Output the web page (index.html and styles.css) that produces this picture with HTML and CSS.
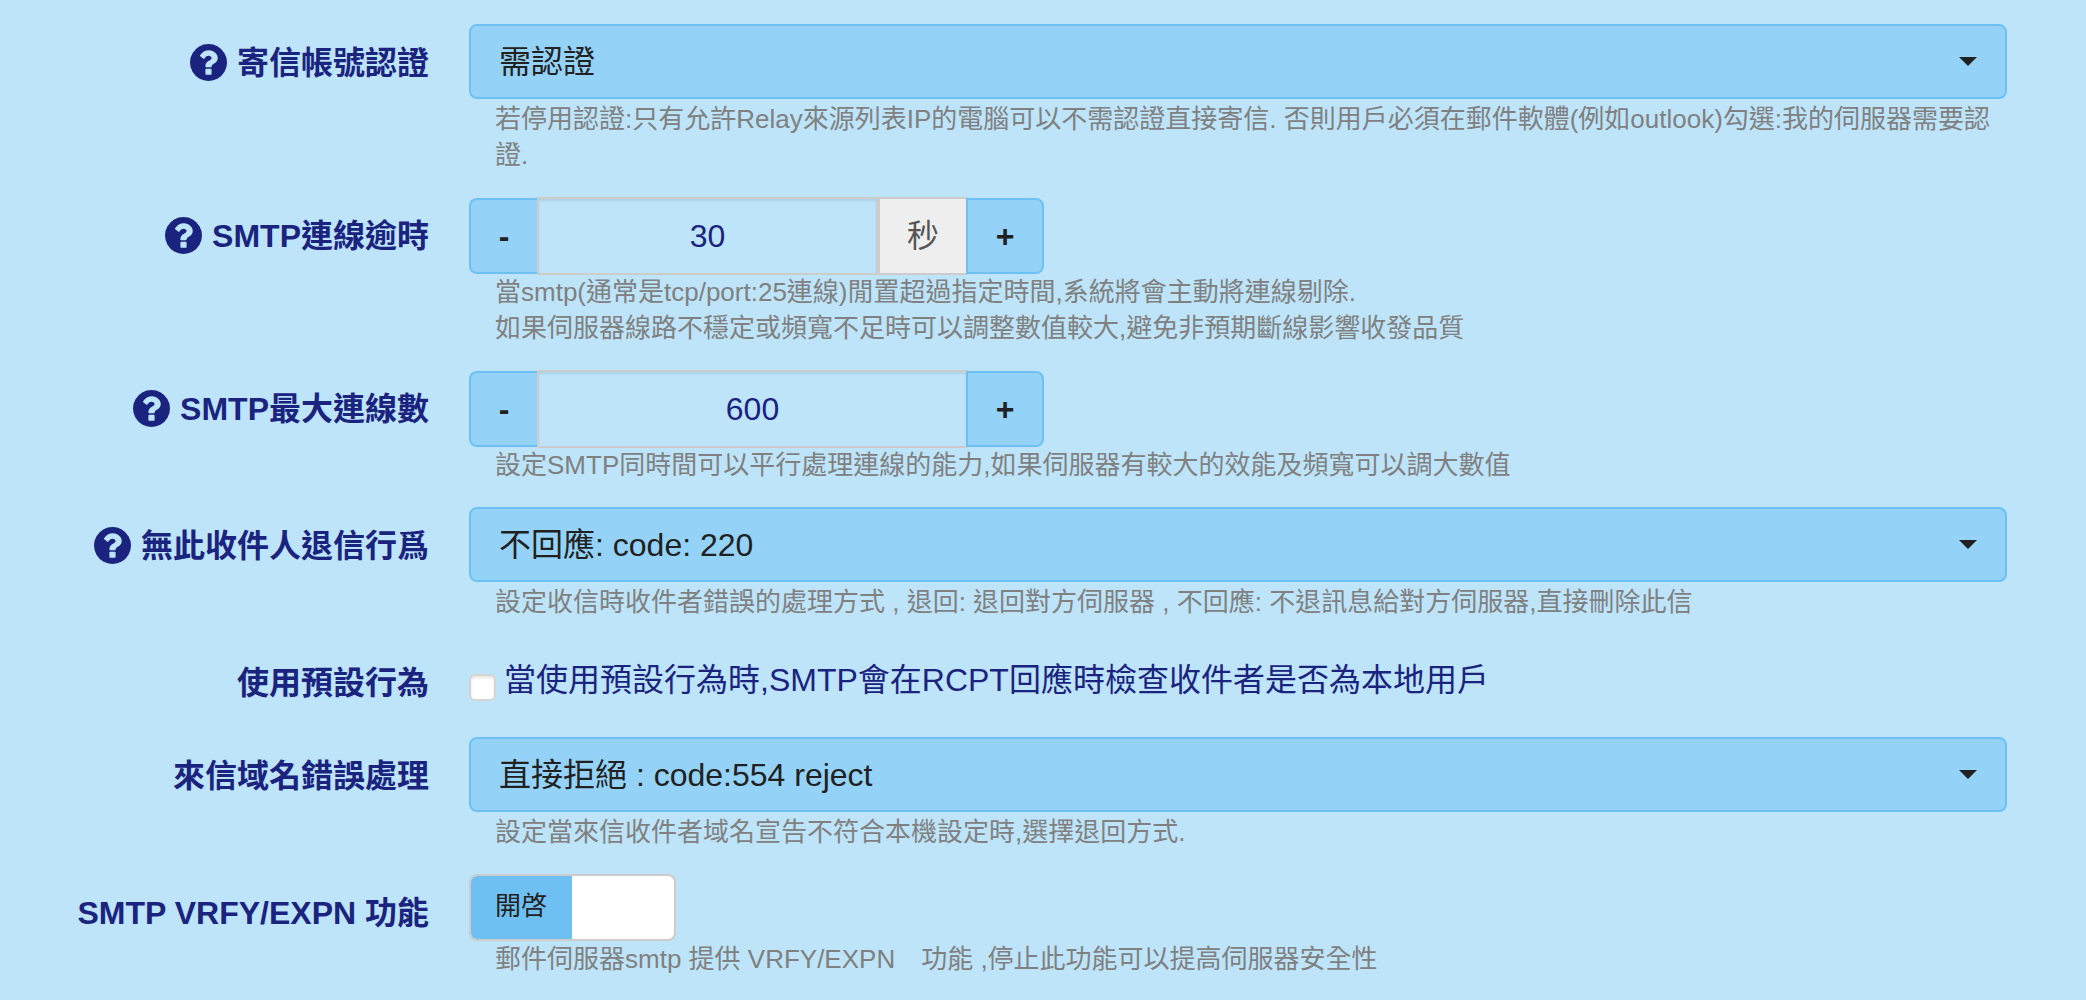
FILE: index.html
```html
<!DOCTYPE html>
<html lang="zh-Hant">
<head>
<meta charset="utf-8">
<meta name="viewport" content="width=device-width, initial-scale=1">
<title>SMTP 設定</title>
<link rel="stylesheet" href="styles.css">
</head>
<body>
<svg class="sprite" aria-hidden="true">
  <symbol id="help" viewBox="0 0 1536 1536">
    <path d="M896 1248v-192q0-14-9-23t-23-9H672q-14 0-23 9t-9 23v192q0 14 9 23t23 9h192q14 0 23-9t9-23zm256-672q0-88-55.500-163T958 297t-170-41q-243 0-371 213-15 24 8 42l132 100q7 6 19 6 16 0 25-12 53-68 86-92 34-24 86-24 48 0 85.500 26t37.500 59q0 38-20 61t-68 45q-63 28-115.500 86.500T640 892v36q0 14 9 23t23 9h192q14 0 23-9t9-23q0-19 21.500-49.500T972 829q32-18 49-28.500t46-35 44.500-48 28-60.500 12.500-81zm384 192q0 209-103 385.500T1153.500 1433 768 1536t-385.500-103T103 1153.500 0 768t103-385.500T382.500 103 768 0t385.500 103T1433 382.500 1536 768z"/>
  </symbol>
</svg>
<form class="settings">
  <div class="row">
    <label class="label" for="auth"><svg class="icon"><use href="#help"/></svg>寄信帳號認證</label>
    <div class="field">
      <div class="control select">
        <select id="auth"><option>需認證</option></select>
      </div>
      <p class="hint">若停用認證:只有允許Relay來源列表IP的電腦可以不需認證直接寄信. 否則用戶必須在郵件軟體(例如outlook)勾選:我的伺服器需要認證.</p>
    </div>
  </div>

  <div class="row">
    <label class="label" for="timeout"><svg class="icon"><use href="#help"/></svg>SMTP連線逾時</label>
    <div class="field">
      <div class="control stepper">
        <button class="step minus" type="button">-</button>
        <input id="timeout" type="text" value="30">
        <span class="unit">秒</span>
        <button class="step plus" type="button">+</button>
      </div>
      <p class="hint">當smtp(通常是tcp/port:25連線)閒置超過指定時間,系統將會主動將連線剔除.<br>如果伺服器線路不穩定或頻寬不足時可以調整數值較大,避免非預期斷線影響收發品質</p>
    </div>
  </div>

  <div class="row">
    <label class="label" for="limit"><svg class="icon"><use href="#help"/></svg>SMTP最大連線數</label>
    <div class="field">
      <div class="control stepper">
        <button class="step minus" type="button">-</button>
        <input id="limit" type="text" value="600">
        <button class="step plus" type="button">+</button>
      </div>
      <p class="hint">設定SMTP同時間可以平行處理連線的能力,如果伺服器有較大的效能及頻寬可以調大數值</p>
    </div>
  </div>

  <div class="row">
    <label class="label" for="bounce"><svg class="icon"><use href="#help"/></svg>無此收件人退信行爲</label>
    <div class="field">
      <div class="control select">
        <select id="bounce"><option>不回應: code: 220</option></select>
      </div>
      <p class="hint">設定收信時收件者錯誤的處理方式 , 退回: 退回對方伺服器 , 不回應: 不退訊息給對方伺服器,直接刪除此信</p>
    </div>
  </div>

  <div class="row">
    <label class="label" for="preset">使用預設行為</label>
    <div class="field">
      <label class="check"><input id="preset" type="checkbox"><span>當使用預設行為時,SMTP會在RCPT回應時檢查收件者是否為本地用戶</span></label>
    </div>
  </div>

  <div class="row">
    <label class="label" for="domain">來信域名錯誤處理</label>
    <div class="field">
      <div class="control select">
        <select id="domain"><option>直接拒絕 : code:554 reject</option></select>
      </div>
      <p class="hint">設定當來信收件者域名宣告不符合本機設定時,選擇退回方式.</p>
    </div>
  </div>

  <div class="row">
    <label class="label" for="vrfy">SMTP VRFY/EXPN 功能</label>
    <div class="field">
      <label class="toggle"><input id="vrfy" type="checkbox" checked><span class="on">開啓</span></label>
      <p class="hint">郵件伺服器smtp 提供 VRFY/EXPN　功能 ,停止此功能可以提高伺服器安全性</p>
    </div>
  </div>
</form>
</body>
</html>
```
FILE: styles.css
```css
* { box-sizing: border-box; }

body {
  margin: 0;
  background: #bde4f9;
  color: #1a237e;
  font-family: "Liberation Sans", Arial, "Noto Sans CJK TC", sans-serif;
  font-size: 32px;
  line-height: 44px;
}

button, input, select { font: inherit; margin: 0; }

.sprite { display: none; }

.settings {
  display: flex;
  flex-direction: column;
  gap: 24px;
  padding: 24px 79px 24px 0;
}

.row {
  display: grid;
  grid-template-columns: 429px minmax(0, 1fr);
  column-gap: 40px;
}

.label {
  display: flex;
  justify-content: flex-end;
  align-items: center;
  align-self: start;
  gap: 10px;
  height: 69px;
  padding-top: 8px;
  font-weight: bold;
  white-space: nowrap;
}

.icon {
  width: 37px;
  height: 37px;
  fill: currentColor;
}

.control { height: 77px; }

.select { position: relative; }

.select select {
  display: block;
  width: 100%;
  height: 75px;
  padding: 0 64px 0 28px;
  appearance: none;
  border: 2px solid #6fc0f2;
  border-radius: 8px;
  background: #94d3f7;
  color: #212121;
}

.select::after {
  content: "";
  position: absolute;
  top: 33px;
  right: 30px;
  border: 9px solid transparent;
  border-top-color: #212121;
  border-bottom: 0;
  pointer-events: none;
}

.hint {
  margin: 0;
  padding: 0 10px 0 26px;
  color: #808080;
  font-size: 26px;
  line-height: 36px;
}

.stepper {
  display: flex;
  align-items: flex-start;
  width: 575px;
}

.stepper input {
  flex: 1;
  min-width: 0;
  height: 78px;
  padding: 0;
  border: 2px solid #ccc;
  border-radius: 0;
  background: transparent;
  box-shadow: inset 0 2px 2px rgba(0, 0, 0, .075);
  color: #1a237e;
  text-align: center;
}

.step {
  height: 76px;
  margin-top: 1px;
  padding: 0;
  border: 2px solid #6fc0f2;
  background: #94d3f7;
  color: #212121;
  font-weight: bold;
}

.minus {
  width: 68px;
  border-right: 0;
  border-radius: 8px 0 0 8px;
}

.plus {
  width: 78px;
  margin-left: -2px;
  border-radius: 0 8px 8px 0;
}

.unit {
  width: 90px;
  height: 78px;
  border: 2px solid #ccc;
  background: #eee;
  color: #555;
  line-height: 74px;
  text-align: center;
}

.check {
  display: flex;
  align-items: flex-start;
  gap: 8px;
  padding-top: 14px;
}

.check input {
  flex: none;
  width: 27px;
  height: 27px;
  margin-top: 16px;
  appearance: none;
  border: 2px solid #d4d4d4;
  border-radius: 6px;
  background: #fff;
  box-shadow: inset 0 2px 3px rgba(0, 0, 0, .1);
}

.check input:checked { background: #1a237e; }

.toggle {
  display: flex;
  width: 207px;
  height: 67px;
  overflow: hidden;
  border: 2px solid #ccc;
  border-radius: 8px;
  background: #fff;
}

.toggle input {
  width: 0;
  height: 0;
  appearance: none;
}

.on {
  width: 101px;
  padding-left: 24px;
  background: #6fc0f2;
  color: #212121;
  font-size: 26px;
  line-height: 60px;
}
```
